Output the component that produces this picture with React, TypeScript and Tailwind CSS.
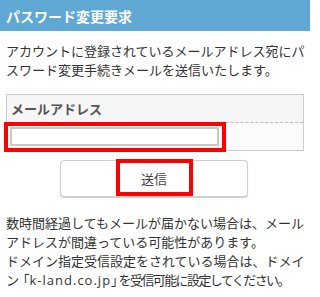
import React from 'react';

const font = { fontFamily: '"Noto Sans CJK JP", "Noto Sans", sans-serif' };

const App: React.FC = () => {
  return (
    <div className="w-[310px] h-[297px] bg-white text-[#333] overflow-hidden" style={font}>
      {/* ヘッダー */}
      <div className="h-[31px] bg-[#5fa8d3] flex items-center pl-[6px]">
        <h1 className="text-[14px] font-bold text-white leading-none">パスワード変更要求</h1>
      </div>

      <p className="mt-[10px] pl-[6px] pr-[4px] text-[13px] leading-[19px]">
        アカウントに登録されているメールアドレス宛にパスワード変更手続きメールを送信いたします。
      </p>

      {/* メールアドレス入力 */}
      <div className="mt-[15px] mx-[6px] w-[298px] border border-[#ccc]">
        <div className="h-[28px] bg-[#f6f6f6] border-b border-dashed border-[#bbb] flex items-center pl-[4px]">
          <span className="text-[13px] font-bold text-[#555]">メールアドレス</span>
        </div>
        <div className="h-[27px] bg-[#fbfbfb] pl-[3px] pt-[4px]">
          <div className="relative w-[209px]">
            <input
              type="text"
              className="block w-[209px] h-[19px] bg-white border-2 border-[#c8c8c8] outline-none"
            />
            <div className="absolute left-[-6px] top-[-5px] w-[222px] h-[30px] border-4 border-[#ff0000] pointer-events-none" />
          </div>
        </div>
      </div>

      {/* 送信ボタン */}
      <div className="mt-[9px] pl-[60px]">
        <div className="relative w-[188px]">
          <button className="w-[188px] h-[37px] bg-white border border-[#d0d0d0] rounded-[4px] shadow-[0_1px_1px_rgba(0,0,0,0.2)] text-[13px] text-[#444]">
            送信
          </button>
          <div className="absolute left-[56px] top-[-1px] w-[77px] h-[37px] border-4 border-[#ff0000] pointer-events-none" />
        </div>
      </div>

      <p className="mt-[16px] pl-[6px] text-[13px] leading-[19px] whitespace-nowrap">
        数時間経過してもメールが届かない場合は、メール
        <br />
        アドレスが間違っている可能性があります。
        <br />
        ドメイン指定受信設定をされている場合は、ドメイ
        <br />
        ン<span className="ml-[4px] [font-feature-settings:'halt']">「</span>
        <span className="font-['Open_Sans',sans-serif] tracking-[1px]">k-land.co.jp</span>
        <span className="[font-feature-settings:'halt']">」</span>
        <span className="ml-[1px] tracking-[-1.6px]">を受信可能に設定してください。</span>
      </p>
    </div>
  );
};

export default App;
